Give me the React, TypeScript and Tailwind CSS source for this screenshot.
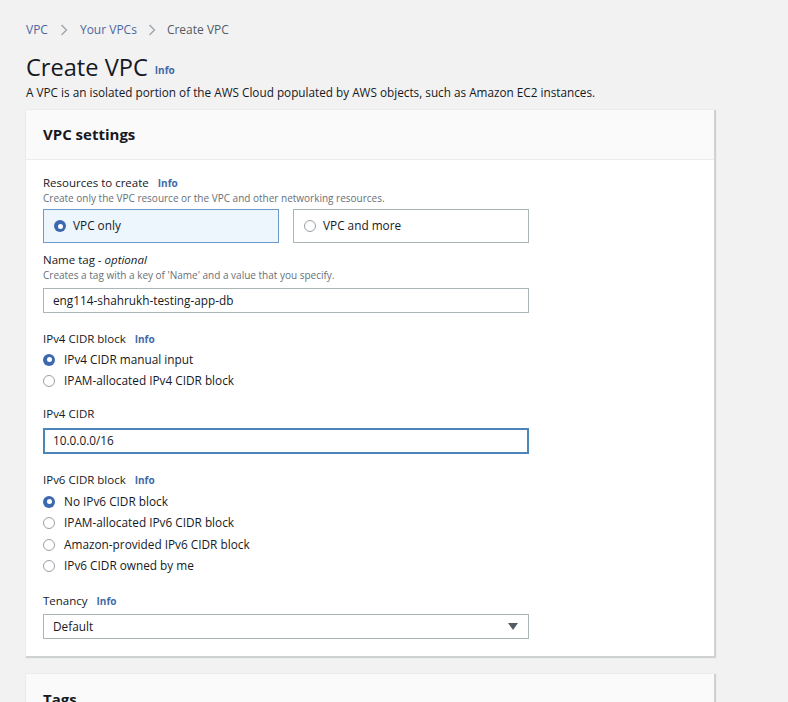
import React from "react";

const Info = () => (
  <span className="ml-[9px] text-[10px] font-bold text-[#3f6aa8]">Info</span>
);

const Radio = ({ checked }: { checked?: boolean }) =>
  checked ? (
    <span className="inline-flex h-[12px] w-[12px] shrink-0 items-center justify-center rounded-full bg-[#3c68b0]">
      <span className="h-[5px] w-[5px] rounded-full bg-white" />
    </span>
  ) : (
    <span className="inline-block h-[12px] w-[12px] shrink-0 rounded-full border border-[#9aa0a6] bg-white" />
  );

const RadioRow = ({ label, checked, h = "h-[21px]" }: { label: string; checked?: boolean; h?: string }) => (
  <div className={`flex items-center ${h}`}>
    <Radio checked={checked} />
    <span className="ml-[9px] text-[11.8px] text-[#16191f]">{label}</span>
  </div>
);

export default function App() {
  return (
    <div
      className="min-h-screen bg-[#f2f2f2] pl-[26px] pr-[74px] pt-[21px] text-[#16191f]"
      style={{ fontFamily: '"Open Sans", "Noto Sans", sans-serif' }}
    >
      {/* Breadcrumb */}
      <div className="flex h-[18px] items-center text-[12px]">
        <span className="text-[#4a67a1]">VPC</span>
        <svg className="mx-[12px]" width="8" height="12" viewBox="0 0 8 12" fill="none">
          <path d="M1.5 1 L6.5 6 L1.5 11" stroke="#9ba3ab" strokeWidth="1.3" />
        </svg>
        <span className="text-[#4a67a1]">Your VPCs</span>
        <svg className="mx-[11px]" width="8" height="12" viewBox="0 0 8 12" fill="none">
          <path d="M1.5 1 L6.5 6 L1.5 11" stroke="#9ba3ab" strokeWidth="1.3" />
        </svg>
        <span className="text-[#545b64]">Create VPC</span>
      </div>

      {/* Title */}
      <div className="mt-[13px] flex h-[30px] items-end">
        <h1 className="text-[23.6px] leading-[30px] text-[#16191f]">Create VPC</h1>
        <span className="mb-[4px] ml-[7px] text-[10px] font-bold text-[#3f6aa8]">Info</span>
      </div>
      <p className="mt-[2px] h-[16px] text-[11.75px] leading-[16px] text-[#16191f]">
        A VPC is an isolated portion of the AWS Cloud populated by AWS objects, such as Amazon EC2 instances.
      </p>

      {/* VPC settings card */}
      <div className="mt-[10px] bg-white shadow-[1px_1px_1px_1px_rgba(0,28,36,0.15)]">
        <div className="flex h-[50px] items-center border-b border-[#eaeded] bg-[#fafafa] px-[17px]">
          <h2 className="text-[15px] font-bold text-[#16191f]">VPC settings</h2>
        </div>
        <div className="px-[17px] pb-[17px] pt-[15px]">
          <div className="w-[486px]">
            <div className="flex h-[16px] items-center text-[11.5px]">
              Resources to create <Info />
            </div>
            <div className="h-[14px] text-[10px] leading-[14px] text-[#687078]">
              Create only the VPC resource or the VPC and other networking resources.
            </div>
            <div className="mt-[4px] grid grid-cols-2 gap-[14px]">
              <div className="flex h-[34px] items-center border border-[#6f9ad0] bg-[#eef6fd] pl-[10px]">
                <Radio checked />
                <span className="ml-[7px] text-[11.8px]">VPC only</span>
              </div>
              <div className="flex h-[34px] items-center border border-[#aab7b8] bg-white pl-[10px]">
                <Radio />
                <span className="ml-[7px] text-[11.8px]">VPC and more</span>
              </div>
            </div>

            <div className="mt-[9px] flex h-[16px] items-center text-[11.5px]">
              Name tag -&nbsp;<i>optional</i>
            </div>
            <div className="h-[14px] text-[10px] leading-[14px] text-[#687078]">
              Creates a tag with a key of 'Name' and a value that you specify.
            </div>
            <div className="mt-[6px] flex h-[25px] items-center border border-[#aab7b8] bg-white px-[9px] text-[11.8px]">
              eng114-shahrukh-testing-app-db
            </div>

            <div className="mt-[18px] flex h-[16px] items-center text-[11.5px]">
              IPv4 CIDR block <Info />
            </div>
            <div className="mt-[2px]">
              <RadioRow label="IPv4 CIDR manual input" checked />
              <RadioRow label="IPAM-allocated IPv4 CIDR block" />
            </div>

            <div className="mt-[15px] flex h-[16px] items-center text-[11.5px]">IPv4 CIDR</div>
            <div className="mt-[6px] flex h-[26px] items-center border-2 border-[#4c86b8] bg-white px-[8px] text-[11.8px]">
              10.0.0.0/16
            </div>

            <div className="mt-[18px] flex h-[16px] items-center text-[11.5px]">
              IPv6 CIDR block <Info />
            </div>
            <div className="mt-[3px]">
              <RadioRow label="No IPv6 CIDR block" checked h="h-[21.5px]" />
              <RadioRow label="IPAM-allocated IPv6 CIDR block" h="h-[21.5px]" />
              <RadioRow label="Amazon-provided IPv6 CIDR block" h="h-[21.5px]" />
              <RadioRow label="IPv6 CIDR owned by me" h="h-[21.5px]" />
            </div>

            <div className="mt-[16px] flex h-[16px] items-center text-[11.5px]">
              Tenancy <Info />
            </div>
            <div className="mt-[5px] flex h-[25px] items-center justify-between border border-[#aab7b8] bg-white pl-[9px] pr-[10px] text-[11.8px]">
              <span>Default</span>
              <svg width="10" height="7" viewBox="0 0 10 7">
                <path d="M0 0 H10 L5 7 Z" fill="#545b64" />
              </svg>
            </div>
          </div>
        </div>
      </div>

      {/* Tags card */}
      <div className="mt-[18px] bg-white shadow-[1px_1px_1px_1px_rgba(0,28,36,0.15)]">
        <div className="flex h-[50px] items-center bg-[#fafafa] px-[17px]">
          <h2 className="text-[15px] font-bold text-[#16191f]">Tags</h2>
        </div>
      </div>
    </div>
  );
}
